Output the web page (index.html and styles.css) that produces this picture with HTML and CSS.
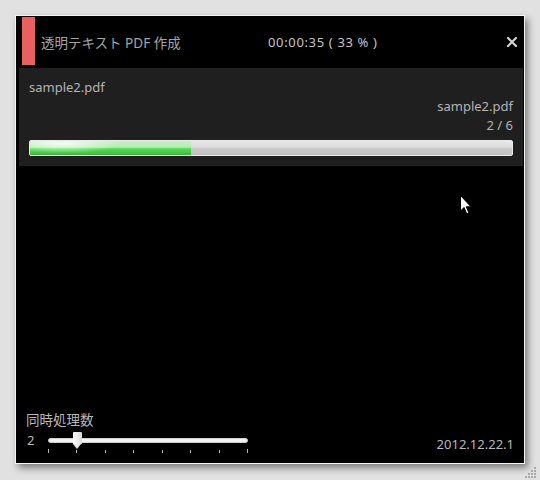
FILE: index.html
```html
<!DOCTYPE html>
<html lang="ja">
<head>
<meta charset="utf-8">
<link rel="stylesheet" href="styles.css">
</head>
<body>
<div class="window">
  <div class="header">
    <div class="accent"></div>
    <div class="title">透明テキスト PDF 作成</div>
    <div class="time">00:00:35 ( 33 % )</div>
    <svg class="close" width="10" height="10" viewBox="0 0 10 10">
      <path d="M1 1 L9 9 M9 1 L1 9" stroke="#d4d4d4" stroke-width="2.2" stroke-linecap="square"/>
    </svg>
  </div>
  <div class="panel">
    <div class="line">sample2.pdf</div>
    <div class="line right">sample2.pdf</div>
    <div class="line right">2 / 6</div>
    <div class="bar"><div class="fill" style="width:33.3%"></div></div>
  </div>
  <div class="spacer"></div>
  <div class="footer">
    <div class="label">同時処理数</div>
    <div class="row">
      <div class="num">2</div>
      <div class="slider">
        <div class="track"></div>
        <div class="thumb"></div>
        <div class="ticks">
          <span class="tick end"></span><span class="tick"></span><span class="tick"></span><span class="tick"></span><span class="tick"></span><span class="tick"></span><span class="tick"></span><span class="tick end"></span>
        </div>
      </div>
      <div class="version">2012.12.22.1</div>
    </div>
  </div>
  <svg class="cursor" width="14" height="22" viewBox="0 0 14 22">
    <path d="M0.5 0.5 L0.5 16 L4 12.5 L6.8 19 L9 18 L6.3 11.8 L11 11.8 Z" fill="#fff" stroke="#000" stroke-width="1"/>
  </svg>
</div>
<svg class="grip" width="12" height="12" viewBox="0 0 12 12">
  <g fill="#a8a8a8">
    <rect x="9" y="1" width="2" height="2"/>
    <rect x="6" y="4" width="2" height="2"/><rect x="9" y="4" width="2" height="2"/>
    <rect x="3" y="7" width="2" height="2"/><rect x="6" y="7" width="2" height="2"/><rect x="9" y="7" width="2" height="2"/>
    <rect x="0" y="10" width="2" height="2"/><rect x="3" y="10" width="2" height="2"/><rect x="6" y="10" width="2" height="2"/><rect x="9" y="10" width="2" height="2"/>
  </g>
</svg>
</body>
</html>
```
FILE: styles.css
```css
html, body {
  margin: 0;
  padding: 0;
}
body {
  background: #e1e1e1;
  width: 540px;
  height: 480px;
  position: relative;
  overflow: hidden;
  font-family: "Noto Sans", "Noto Sans CJK JP", sans-serif;
  font-size: 13px;
}
.window {
  position: relative;
  margin: 15px 0 0 15px;
  width: 508px;
  height: 447px;
  border: 1px solid #f4f4f4;
  background: #000;
  box-shadow: 3px 4px 7px rgba(0, 0, 0, 0.45);
  display: flex;
  flex-direction: column;
}
.header {
  height: 52px;
  display: flex;
  align-items: center;
  flex-shrink: 0;
}
.accent {
  align-self: flex-start;
  margin: 1px 0 0 6px;
  width: 13px;
  height: 48px;
  background: #ea5f5f;
}
.title {
  width: 233px;
  padding-left: 6px;
  box-sizing: border-box;
  color: #a4a4a4;
  font-size: 13.5px;
  white-space: nowrap;
}
.time {
  flex: 1;
  color: #c4c4c4;
  letter-spacing: 0.65px;
  white-space: nowrap;
}
.close {
  display: block;
  margin-right: 7px;
}
.panel {
  margin: 0 1px 0 3px;
  background: #1f1f1f;
  padding: 10px 10px 10px 10px;
  flex-shrink: 0;
}
.line {
  line-height: 19px;
  color: #b4b4b4;
  white-space: nowrap;
}
.right {
  text-align: right;
}
.bar {
  margin-top: 5px;
  height: 14px;
  border: 1px solid #eaeaea;
  border-radius: 2px;
  background: linear-gradient(to bottom, #e8e8e8 0%, #dadada 45%, #c9c9c9 55%, #c2c2c2 100%);
  overflow: hidden;
}
.fill {
  height: 100%;
  background:
    radial-gradient(ellipse 35% 70% at 20% 20%, rgba(255, 255, 255, 0.8), rgba(255, 255, 255, 0) 100%),
    linear-gradient(to bottom, #c8f0c8 0%, #b6eab6 45%, #5cd65c 55%, #42c842 85%, #38b838 100%);
}
.spacer {
  flex: 1;
}
.footer {
  padding: 0 10px 10px 10px;
}
.label {
  line-height: 18px;
  color: #b8b8b8;
  font-size: 13.5px;
}
.row {
  display: flex;
  align-items: flex-start;
  height: 22px;
  margin-top: 2px;
}
.num {
  width: 22px;
  padding-left: 1px;
  box-sizing: border-box;
  line-height: 18px;
  color: #b8b8b8;
}
.slider {
  position: relative;
  width: 200px;
  height: 22px;
}
.track {
  position: absolute;
  left: 0;
  right: 0;
  top: 7px;
  height: 3px;
  background: #f2f2f2;
  border: 1px solid #cfcfcf;
  border-radius: 3px;
}
.thumb {
  position: absolute;
  left: 25px;
  top: 1px;
  width: 9px;
  height: 12px;
  background: linear-gradient(to right, #ffffff, #d8d8d8);
  border-radius: 1px 1px 0 0;
}
.thumb::after {
  content: "";
  position: absolute;
  left: 0;
  top: 12px;
  border-left: 4.5px solid transparent;
  border-right: 4.5px solid transparent;
  border-top: 5px solid #e8e8e8;
}
.ticks {
  position: absolute;
  left: 0;
  right: 0;
  top: 19px;
  display: flex;
  justify-content: space-between;
}
.tick {
  width: 1px;
  height: 3px;
  background: #bcbcbc;
}
.tick.end {
  height: 4px;
  margin-top: -1px;
}
.version {
  flex: 1;
  text-align: right;
  color: #b8b8b8;
  line-height: 18px;
  padding-top: 4px;
}
.cursor {
  position: absolute;
  left: 444px;
  top: 179px;
}
.grip {
  position: absolute;
  left: 525px;
  top: 466px;
}
```
